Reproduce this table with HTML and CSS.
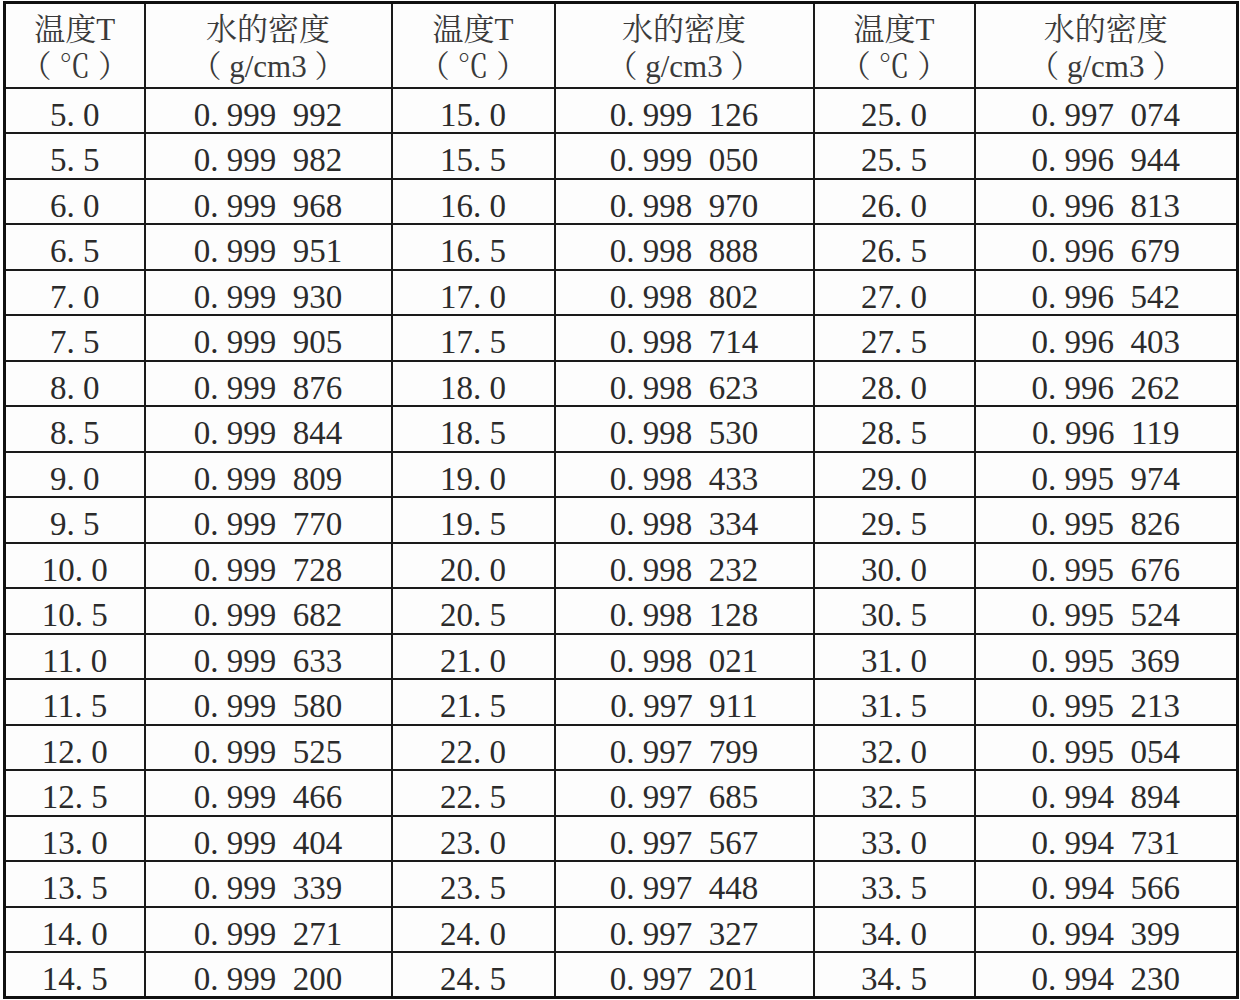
FILE: index.html
```html
<!DOCTYPE html>
<html lang="zh-CN">
<head>
<meta charset="utf-8">
<title>水的密度表</title>
<link rel="stylesheet" href="styles.css">
</head>
<body>
<table class="density">
<colgroup>
<col class="c-t"><col class="c-d1"><col class="c-t2"><col class="c-d2"><col class="c-t3"><col class="c-d3">
</colgroup>
<thead>
<tr class="head">
<th>温度T<br>（ ℃ ）</th><th>水的密度<br>（ g/cm3 ）</th>
<th>温度T<br>（ ℃ ）</th><th>水的密度<br>（ g/cm3 ）</th>
<th>温度T<br>（ ℃ ）</th><th>水的密度<br>（ g/cm3 ）</th>
</tr>
</thead>
<tbody>
<tr><td>5. 0</td><td>0. 999&ensp;992</td><td>15. 0</td><td>0. 999&ensp;126</td><td>25. 0</td><td>0. 997&ensp;074</td></tr>
<tr><td>5. 5</td><td>0. 999&ensp;982</td><td>15. 5</td><td>0. 999&ensp;050</td><td>25. 5</td><td>0. 996&ensp;944</td></tr>
<tr><td>6. 0</td><td>0. 999&ensp;968</td><td>16. 0</td><td>0. 998&ensp;970</td><td>26. 0</td><td>0. 996&ensp;813</td></tr>
<tr><td>6. 5</td><td>0. 999&ensp;951</td><td>16. 5</td><td>0. 998&ensp;888</td><td>26. 5</td><td>0. 996&ensp;679</td></tr>
<tr><td>7. 0</td><td>0. 999&ensp;930</td><td>17. 0</td><td>0. 998&ensp;802</td><td>27. 0</td><td>0. 996&ensp;542</td></tr>
<tr><td>7. 5</td><td>0. 999&ensp;905</td><td>17. 5</td><td>0. 998&ensp;714</td><td>27. 5</td><td>0. 996&ensp;403</td></tr>
<tr><td>8. 0</td><td>0. 999&ensp;876</td><td>18. 0</td><td>0. 998&ensp;623</td><td>28. 0</td><td>0. 996&ensp;262</td></tr>
<tr><td>8. 5</td><td>0. 999&ensp;844</td><td>18. 5</td><td>0. 998&ensp;530</td><td>28. 5</td><td>0. 996&ensp;119</td></tr>
<tr><td>9. 0</td><td>0. 999&ensp;809</td><td>19. 0</td><td>0. 998&ensp;433</td><td>29. 0</td><td>0. 995&ensp;974</td></tr>
<tr><td>9. 5</td><td>0. 999&ensp;770</td><td>19. 5</td><td>0. 998&ensp;334</td><td>29. 5</td><td>0. 995&ensp;826</td></tr>
<tr><td>10. 0</td><td>0. 999&ensp;728</td><td>20. 0</td><td>0. 998&ensp;232</td><td>30. 0</td><td>0. 995&ensp;676</td></tr>
<tr><td>10. 5</td><td>0. 999&ensp;682</td><td>20. 5</td><td>0. 998&ensp;128</td><td>30. 5</td><td>0. 995&ensp;524</td></tr>
<tr><td>11. 0</td><td>0. 999&ensp;633</td><td>21. 0</td><td>0. 998&ensp;021</td><td>31. 0</td><td>0. 995&ensp;369</td></tr>
<tr><td>11. 5</td><td>0. 999&ensp;580</td><td>21. 5</td><td>0. 997&ensp;911</td><td>31. 5</td><td>0. 995&ensp;213</td></tr>
<tr><td>12. 0</td><td>0. 999&ensp;525</td><td>22. 0</td><td>0. 997&ensp;799</td><td>32. 0</td><td>0. 995&ensp;054</td></tr>
<tr><td>12. 5</td><td>0. 999&ensp;466</td><td>22. 5</td><td>0. 997&ensp;685</td><td>32. 5</td><td>0. 994&ensp;894</td></tr>
<tr><td>13. 0</td><td>0. 999&ensp;404</td><td>23. 0</td><td>0. 997&ensp;567</td><td>33. 0</td><td>0. 994&ensp;731</td></tr>
<tr><td>13. 5</td><td>0. 999&ensp;339</td><td>23. 5</td><td>0. 997&ensp;448</td><td>33. 5</td><td>0. 994&ensp;566</td></tr>
<tr><td>14. 0</td><td>0. 999&ensp;271</td><td>24. 0</td><td>0. 997&ensp;327</td><td>34. 0</td><td>0. 994&ensp;399</td></tr>
<tr><td>14. 5</td><td>0. 999&ensp;200</td><td>24. 5</td><td>0. 997&ensp;201</td><td>34. 5</td><td>0. 994&ensp;230</td></tr>
</tbody>
</table>
</body>
</html>
```

FILE: styles.css
```css
html, body {
  margin: 0;
  padding: 0;
  background: #ffffff;
}

body {
  padding: 1px 0 0 3px;
}

.density {
  border-collapse: collapse;
  table-layout: fixed;
  width: 1236px;
  border: 3px solid #111;
  font-family: "Liberation Serif", "Noto Serif CJK SC", "Noto Sans CJK SC", serif;
  color: #2b2b2b;
  background: #fdfdfd;
}

.c-t { width: 140px; }
.c-d1 { width: 247px; }
.c-t2 { width: 163px; }
.c-d2 { width: 259px; }
.c-t3 { width: 161px; }
.c-d3 { width: 263px; }

.density th,
.density td {
  border: 2px solid #1a1a1a;
  text-align: center;
  white-space: pre;
  padding: 0;
}

.head {
  height: 85px;
}

.density th {
  font-weight: normal;
  font-size: 31px;
  line-height: 37px;
  color: #3a3a3a;
  padding-top: 5px;
}

.density tbody tr {
  height: 45px;
}

.density tbody tr:nth-child(even) {
  height: 46px;
}

.density td {
  font-size: 33px;
  line-height: 30px;
  padding-top: 9px;
}
```
